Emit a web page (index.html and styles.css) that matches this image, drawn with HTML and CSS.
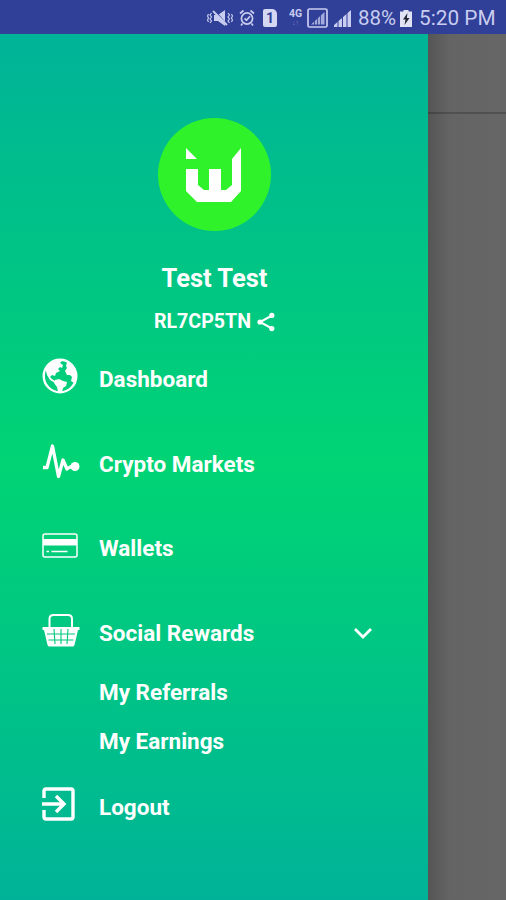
FILE: index.html
```
<!DOCTYPE html>
<html lang="en">
<head>
  <meta charset="UTF-8" />
  <meta name="viewport" content="width=device-width, initial-scale=1" />
  <title>Menu</title>
  <link rel="stylesheet" href="styles.css">
</head>
<body>

  <header class="status-bar">
    <svg class="mute" width="26" height="18" viewBox="0 0 26 18">
      <path d="M7 6h4l7-5v16l-7-5H7z" fill="#c9cdf0"/>
      <path d="M8 2l11 13" stroke="#303f97" stroke-width="1.500"/>
      <path d="M6 2l14 14" stroke="#c9cdf0" stroke-width="1.800"/>
      <path d="M4.500 4l-1.500 2 1.500 2-1.500 2 1.500 2-1.500 2M1.500 5l-1 2 1 2-1 2 1 2M21 4l1.500 2-1.500 2 1.500 2-1.500 2 1.500 2M24.500 5l1 2-1 2 1 2-1 2" fill="none" stroke="#c9cdf0" stroke-width="1.200"/>
    </svg>
    <svg class="alarm" width="16" height="18" viewBox="0 0 16 18" fill="none" stroke="#c9cdf0">
      <circle cx="8" cy="9.500" r="5.600" stroke-width="1.700"/>
      <path d="M5.500 9.300l2 2 3.500-4M1 4.500l3.500-3M15 4.500l-3.500-3M3.500 14.500L2 16.500M12.500 14.500l1.500 2" stroke-width="1.700"/>
    </svg>
    <span class="sim">1</span>
    <span class="network">4G<i>↓↑</i></span>
    <svg class="signal-box" width="21" height="20" viewBox="0 0 21 20">
      <rect x="1" y="1" width="19" height="18" rx="1.500" fill="none" stroke="#c9cdf0" stroke-width="1.700"/>
      <path d="M4 16.500L17.500 4v12.500z" fill="#c9cdf0" opacity=".75"/>
      <path d="M7.500 8v9M10.500 6v11M13.500 4v13" stroke="#303f97" stroke-width=".8"/>
    </svg>
    <svg class="signal" width="18" height="18" viewBox="0 0 18 18" fill="#c9cdf0">
      <path d="M0 18v-2l3.500-3v5zM4.500 18v-6L8 9v9zM9 18V8l3.500-3v13zM13.500 18V4L17 1v17z"/>
    </svg>
    <span class="percent">88%</span>
    <svg class="battery" width="12" height="17" viewBox="0 0 12 17">
      <path d="M3.500 0h5v1.500H12V17H0V1.500h3.500z" fill="#e1e3f5"/>
      <path d="M7.500 3L3 9.500h2.500L4.500 15 9.500 8H6.800z" fill="#202631"/>
    </svg>
    <span class="clock">5:20 PM</span>
  </header>

  <div class="screen">
    <nav class="drawer">
      <div class="profile">
        <svg class="avatar" width="114" height="114" viewBox="0 0 114 114">
          <circle cx="56.500" cy="56.500" r="56.500" fill="#30f22b"/>
          <path d="M28 30l11 11H28zM28 51h12v16l6 5h5V51h12v21h5l6-5V41l9-11v43L73 84H39L28 73z" fill="#fff"/>
        </svg>
        <h1 class="name">Test Test</h1>
        <p class="code">RL7CP5TN
          <svg width="18" height="20" viewBox="0 0 18 20">
            <path d="M15 3.500L3 10l12 6.500" fill="none" stroke="#fff" stroke-width="2"/>
            <g fill="#fff"><circle cx="14.800" cy="3.400" r="2.600"/><circle cx="3" cy="10" r="2.600"/><circle cx="14.800" cy="16.600" r="2.600"/></g>
          </svg>
        </p>
      </div>

      <ul class="menu">
        <li class="item">
          <svg width="38" height="38" viewBox="0 0 38 38">
            <circle cx="18" cy="18" r="16.300" fill="none" stroke="#fff" stroke-width="2.400"/>
            <path d="M4 10l5-5 6-3 5 1-2 2 3 2-1 3-2-1-2 2 2 2-4 2-1 3-3-1-2 2 2 2 3 2 2 2-2 0-5-3-3-5-1-4z" fill="#fff"/>
            <path d="M13 22l4-1 4 2 4 1-1 4-3 2-1 4h-4l-1-5-3-4z" fill="#fff"/>
            <path d="M25 4l5 3 4 6 0 7-2 5-3-2 1-4-2-2-3 0-2-4 2-3-1-2z" fill="#fff"/>
          </svg>
          <span>Dashboard</span>
        </li>
        <li class="item">
          <svg width="38" height="38" viewBox="0 0 38 38">
            <path d="M1 24.500h4L10.500 3l6 30.500L21 17l4 9 3-2h5" fill="none" stroke="#fff" stroke-width="3.300" stroke-linejoin="round"/>
            <circle cx="33" cy="23.500" r="4.500" fill="#fff"/>
          </svg>
          <span>Crypto Markets</span>
        </li>
        <li class="item">
          <svg width="38" height="38" viewBox="0 0 38 38">
            <rect x="1" y="7" width="34" height="23" rx="2" fill="none" stroke="#fff" stroke-width="1.500"/>
            <path d="M1 12h34v6.500H1z" fill="#fff"/>
            <path d="M4.500 24.500h2.500M9.500 24.500h16" stroke="#fff" stroke-width="1.500"/>
          </svg>
          <span>Wallets</span>
        </li>
        <li class="item">
          <svg width="38" height="38" viewBox="0 0 38 38">
            <path d="M7.500 17V7q0-4 4-4H26q4 0 4 4v10" fill="none" stroke="#fff" stroke-width="2"/>
            <path d="M.5 15h37v3H36l-3.500 15q-.5 1.500-2 1.500h-23q-1.500 0-2-1.500L2 18H.5z" fill="#fff"/>
            <path d="M5 22h28M6.500 28h25M12 17l1 15M19 17v15M26 17l-1 15" stroke="#00ca7d" stroke-width="1.100"/>
          </svg>
          <span>Social Rewards</span>
          <svg class="chevron" width="20" height="12" viewBox="0 0 20 12">
            <path d="M2 2l8 8 8-8" fill="none" stroke="#fff" stroke-width="2.800"/>
          </svg>
        </li>
      </ul>

      <ul class="submenu">
        <li>My Referrals</li>
        <li>My Earnings</li>
      </ul>

      <div class="item logout">
        <svg width="38" height="38" viewBox="0 0 38 38">
          <path d="M2 12V5q0-2 2-2h25q2 0 2 2v26q0 2-2 2H4q-2 0-2-2v-7" fill="none" stroke="#fff" stroke-width="3.400"/>
          <path d="M0 18h22M14 10l8 8-8 8" fill="none" stroke="#fff" stroke-width="3.400"/>
        </svg>
        <span>Logout</span>
      </div>
    </nav>

    <main class="page">
      <div class="toolbar"></div>
    </main>
  </div>

</body>
</html>
```

FILE: styles.css
```
* {
  box-sizing: border-box;
}
body {
  margin: 0;
  height: 900px;
  font-family: Roboto, sans-serif;
  color: #fff;
  overflow: hidden;
}
svg {
  display: block;
  flex-shrink: 0;
}
ul, h1, p {
  margin: 0;
  padding: 0;
  list-style: none;
}

.status-bar {
  display: flex;
  align-items: center;
  height: 34px;
  padding: 2px 0 0 207px;
  background: #303f97;
  color: #c9cdf0;
  white-space: nowrap;
}
.alarm {
  margin-left: 6px;
}
.sim {
  width: 14px;
  height: 18px;
  margin-left: 8px;
  border-radius: 2px 5px 2px 2px;
  background: #d5d8f2;
  color: #303f97;
  font-size: 14px;
  font-weight: 700;
  line-height: 18px;
  text-align: center;
}
.network {
  width: 15px;
  margin-left: 11px;
  font-size: 10.5px;
  font-weight: 700;
  line-height: 10px;
  text-align: center;
}
.network i {
  display: block;
  font-size: 7px;
  font-style: normal;
  line-height: 8px;
  opacity: 0.45;
}
.signal-box {
  margin-left: 4px;
}
.signal {
  margin-left: 6px;
}
.percent {
  width: 42px;
  margin-left: 6px;
  font-size: 20.5px;
}
.clock {
  margin-left: 7px;
  font-size: 20.8px;
}

.screen {
  display: flex;
  height: 866px;
}
.drawer {
  width: 428px;
  background: linear-gradient(#00b398, #00d474 50%, #00b398);
}
.profile {
  display: flex;
  flex-direction: column;
  align-items: center;
  padding: 84px 0 0 1px;
}
.name {
  margin-top: 30px;
  font-size: 25.5px;
  font-weight: 700;
  line-height: 32px;
}
.code {
  display: flex;
  align-items: center;
  gap: 6px;
  margin-top: 16px;
  font-size: 19.6px;
  font-weight: 700;
  line-height: 24px;
}

.menu {
  padding-top: 1px;
}
.item {
  display: flex;
  align-items: center;
  height: 84.5px;
  padding: 0 55px 0 42px;
  font-size: 22.5px;
  font-weight: 700;
}
.item span {
  margin: 4px 0 0 19px;
}
.chevron {
  margin: 4px 0 0 auto;
}
.submenu {
  margin-top: -5px;
  padding-left: 99px;
  font-size: 22.5px;
  font-weight: 700;
  line-height: 49px;
}
.logout {
  height: 78px;
}

.page {
  flex: 1;
  background: linear-gradient(to right, #555, #646464 22px, #666);
}
.toolbar {
  height: 80px;
  border-bottom: 2px solid #00000033;
}
```
